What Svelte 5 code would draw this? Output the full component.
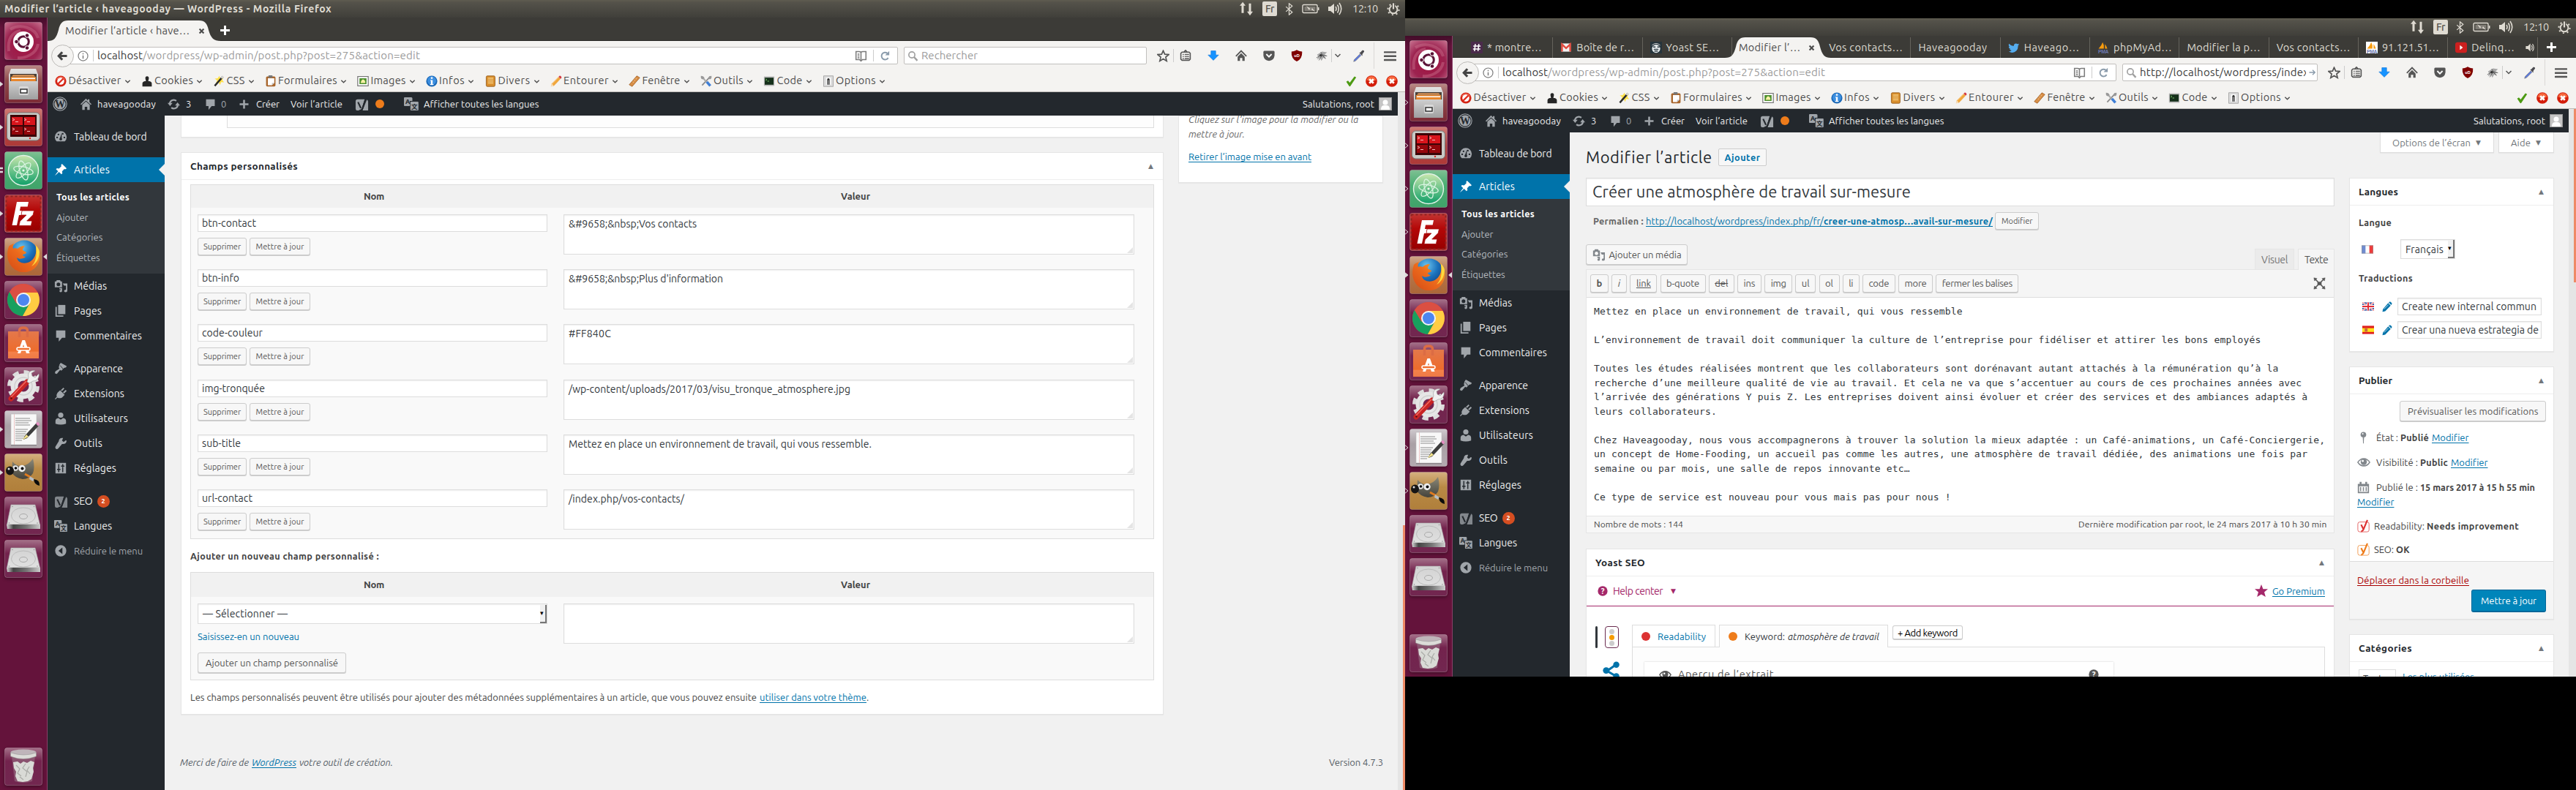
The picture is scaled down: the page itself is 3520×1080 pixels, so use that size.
<script>
  // Keeps a label at a fixed width whatever sans-serif is installed.
  function fit(node, width) {
    const range = document.createRange();
    range.selectNodeContents(node);
    const natural = range.getBoundingClientRect().width;
    const count = node.textContent.length;
    node.style.letterSpacing = `${(width - natural) / count}px`;
    node.style.width = `${width}px`;
  }

  const apps = ['ubuntu', 'files', 'terminator', 'atom', 'filezilla', 'firefox', 'chrome', 'software', 'settings', 'gedit', 'gimp', 'disk', 'disk'];
  const running = ['files', 'terminator', 'atom', 'filezilla', 'firefox', 'gedit', 'gimp'];

  const devItems = [
    ['forbid', 'Désactiver', 72], ['stamp', 'Cookies', 53], ['wand', 'CSS', 25], ['clip', 'Formulaires', 81],
    ['image', 'Images', 48], ['info', 'Infos', 35], ['book', 'Divers', 44], ['pencil', 'Entourer', 62],
    ['ruler', 'Fenêtre', 52], ['tools', 'Outils', 41], ['term', 'Code', 35], ['switch', 'Options', 55]
  ];

  const menuTop = [['media', 'Médias', 45], ['pages', 'Pages', 38], ['comment', 'Commentaires', 93]];
  const menuMid = [['brush', 'Apparence', 67], ['plug', 'Extensions', 69], ['user', 'Utilisateurs', 74], ['wrench', 'Outils', 39], ['sliders', 'Réglages', 58]];

  const fields = [
    ['btn-contact', 74, '&#9658;&nbsp;Vos contacts', 175],
    ['btn-info', 51, "&#9658;&nbsp;Plus d'information", 211],
    ['code-couleur', 83, '#FF840C', 58],
    ['img-tronquée', 86, '/wp-content/uploads/2017/03/visu_tronque_atmosphere.jpg', 385],
    ['sub-title', 53, 'Mettez en place un environnement de travail, qui vous ressemble.', 414],
    ['url-contact', 69, '/index.php/vos-contacts/', 158]
  ];

  const tabsBefore = [['slack', '* montre…', 75], ['gmail', 'Boîte de r…', 79], ['yoastfav', 'Yoast SE…', 73]];
  const tabsAfter = [
    [null, 'Vos contacts…', 101], [null, 'Haveagooday', 94], ['twitter', 'Haveago…', 76], ['pma', 'phpMyAd…', 80],
    [null, 'Modifier la p…', 100], [null, 'Vos contacts…', 101], ['pmawhite', '91.121.51…', 78], ['youtube', 'Delinq…', 59]
  ];

  const quicktags = [
    ['b', 25, 'bold'], ['i', 21, 'ital'], ['link', 37, 'und'], ['b-quote', 62, ''], ['del', 35, 'strike'], ['ins', 33, ''], ['img', 38, ''],
    ['ul', 28, ''], ['ol', 28, ''], ['li', 23, ''], ['code', 45, ''], ['more', 47, ''], ['fermer les balises', 113, '']
  ];

  const article = [
    'Mettez en place un environnement de travail, qui vous ressemble', '',
    'L’environnement de travail doit communiquer la culture de l’entreprise pour fidéliser et attirer les bons employés', '',
    'Toutes les études réalisées montrent que les collaborateurs sont dorénavant autant attachés à la rémunération qu’à la',
    'recherche d’une meilleure qualité de vie au travail. Et cela ne va que s’accentuer au cours de ces prochaines années avec',
    'l’arrivée des générations Y puis Z. Les entreprises doivent ainsi évoluer et créer des services et des ambiances adaptés à',
    'leurs collaborateurs.', '',
    'Chez Haveagooday, nous vous accompagnerons à trouver la solution la mieux adaptée : un Café-animations, un Café-Conciergerie,',
    'un concept de Home-Fooding, un accueil pas comme les autres, une atmosphère de travail dédiée, des animations une fois par',
    'semaine ou par mois, une salle de repos innovante etc…', '',
    'Ce type de service est nouveau pour vous mais pas pour nous !'
  ].join('\n');
</script>

{#snippet T(s, w, cls = '')}<span class="t {cls}" use:fit={w}>{s}</span>{/snippet}

{#snippet appIcon(n)}
  <svg class="app" viewBox="0 0 52 52">
    {#if n === 'ubuntu'}
      <rect class="tile" width="51" height="51" x=".5" y=".5" rx="3" fill="url(#gUbuntu)" />
      <path d="M8 10C22 2 42 8 46 22M46 30C44 44 28 50 18 49M6 40C4 24 10 14 22 12" fill="none" stroke="#d8869f" stroke-width="4" opacity=".35" />
      <circle cx="26" cy="27" r="14" fill="#fff" />
      <circle cx="26" cy="27" r="7.3" fill="none" stroke="#5b1236" stroke-width="3" />
      <g fill="#5b1236" stroke="#fff" stroke-width="1"><circle cx="16.500" cy="27" r="2.800" /><circle cx="31" cy="18.500" r="2.800" /><circle cx="31" cy="35.500" r="2.800" /></g>
    {:else if n === 'files'}
      <rect class="tile" width="51" height="51" x=".5" y=".5" rx="3" fill="url(#gFiles)" />
      <path d="M6 13 9 5h34l3 8v34H6z" fill="url(#gMetal)" /><path d="M8 12h36v12H8z" fill="#4a4038" />
      <path d="M9 16h34v8H9z" fill="#e8862c" /><path d="M10 17.500h32v1.500H10z" fill="#fff" /><path d="M12 13.500h28l2 2H10z" fill="#f0a05c" />
      <path d="M7 22h39v25H7z" fill="url(#gDrawer)" /><rect x="20" y="29" width="13" height="12" rx="2" fill="#d8d8d8" /><rect x="22" y="33" width="9" height="5" fill="#fff" stroke="#333" stroke-width="1.500" />
    {:else if n === 'terminator'}
      <rect class="tile" width="51" height="51" x=".5" y=".5" rx="3" fill="url(#gTerm)" />
      <rect x="3.500" y="6" width="45" height="38" rx="5" fill="#c9c9c5" stroke="#777" /><rect x="8" y="9" width="36" height="30" fill="#3c0507" />
      <path d="M10 12h15v11H10zM27 12h15v11H27z" fill="#d8151c" /><path d="M10 25h15v11H10zM27 25h15v11H27z" fill="#94060b" />
      <path d="m11 14 3 1.500-3 1.500m4 1.500h4m8-4.500 3 1.500-3 1.500m4 1.500h4M11 27l3 1.500-3 1.500m4 1.500h4m8-4.500 3 1.500-3 1.500m4 1.500h4" fill="none" stroke="#f2b8b8" />
      <circle cx="35" cy="41" r="1.200" fill="#e02020" />
    {:else if n === 'atom'}
      <rect class="tile" width="51" height="51" x=".5" y=".5" rx="3" fill="url(#gAtom)" />
      <circle cx="26" cy="26" r="20.500" fill="url(#gAtom2)" stroke="#e2f3e8" stroke-width="1.400" />
      <g fill="none" stroke="#d8f3e0" stroke-width="1.300"><ellipse cx="26" cy="26" rx="13.500" ry="5" transform="rotate(13 26 26)" /><ellipse cx="26" cy="26" rx="13.500" ry="5" transform="rotate(73 26 26)" /><ellipse cx="26" cy="26" rx="13.500" ry="5" transform="rotate(-47 26 26)" /></g>
      <circle cx="26" cy="26" r="1.600" fill="#e8f8ec" />
    {:else if n === 'filezilla'}
      <rect class="tile" width="51" height="51" x=".5" y=".5" rx="3" fill="#bb3a38" />
      <rect x="2.500" y="2.500" width="47" height="47" fill="url(#gFz)" stroke="#8d2422" stroke-width="2" stroke-dasharray="3 3" />
      <path d="M17 10h16l-1.300 6.500H22l-1 5.500h9l-1.200 6H20l-3 14h-6.500z" fill="#fff" /><path d="M24 22h16.500l-1.300 5.500-8.500 8.500h7l-1.300 6.500H20l1.300-6 8.700-8.500h-7z" fill="#fff" stroke="#a80f0f" stroke-width=".8" />
    {:else if n === 'firefox'}
      <rect class="tile" width="51" height="51" x=".5" y=".5" rx="3" fill="url(#gFf)" />
      <circle cx="27" cy="23" r="19.500" fill="url(#gGlobe)" />
      <path d="M6 12c-6 17 3 34 19 35 16 1 25-12 23-25-1-6-3-10-6-13 3 9 1 18-6 23-7 5-18 3-19-5 3 3 9 2 12-1-3 0-4-2-4-3 2-1 5-1 5-3l-5-3c0-3 2-4 3-6-5 0-8 2-10 4-2-1-5-1-6 0-1-3 0-5 1-7-4 1-6 3-7 4z" fill="url(#gFox)" />
      <path d="M48 20c-1 9-4 15-11 19 6-6 8-15 6-28 3 2 5 6 5 9z" fill="#ffd93d" />
    {:else if n === 'chrome'}
      <rect class="tile" width="51" height="51" x=".5" y=".5" rx="3" fill="url(#gDark)" />
      <circle cx="26" cy="26" r="22" fill="#dc4437" />
      <path d="M6.900 15A22 22 0 0 0 25 48l9.500-17L26 26z" fill="#18a05e" /><path d="M25 48a22 22 0 0 0 20.500-32H26v10l8.500 5z" fill="#ffcd42" /><path d="M6.900 15 16.400 31 26 16h19.500A22 22 0 0 0 6.900 15z" fill="#db4f42" />
      <circle cx="26" cy="26" r="10" fill="#f3f3f3" /><circle cx="26" cy="26" r="8" fill="#4d86f0" />
    {:else if n === 'software'}
      <rect class="tile" width="51" height="51" x=".5" y=".5" rx="3" fill="url(#gDark)" />
      <path d="M5 10h42v37H5z" fill="url(#gBag)" /><path d="M20.500 18V9q0-4 5.500-4t5.500 4v9" fill="none" stroke="#dc6c44" stroke-width="3.500" />
      <path d="M18 40 24.500 22h3.500L34.500 40H30l-4-12-4 12z" fill="#fff" /><rect x="17" y="32" width="18" height="4" rx="2" fill="#f07030" stroke="#fff" stroke-width="1.500" />
    {:else if n === 'settings'}
      <rect class="tile" width="51" height="51" x=".5" y=".5" rx="3" fill="url(#gDark)" />
      <circle cx="26" cy="26" r="19" fill="none" stroke="#dcdcdc" stroke-width="6" stroke-dasharray="8 6.920" /><circle cx="26" cy="26" r="12.500" fill="none" stroke="#e6e6e6" stroke-width="10" />
      <circle cx="26" cy="26" r="12" fill="none" stroke="#cfcfcf" stroke-width="1.500" />
      <path d="M9 43 31 20" stroke="#c92424" stroke-width="7" stroke-linecap="round" /><path d="M9 41 30 19" stroke="#ef6a62" stroke-width="1.500" />
      <path d="M31 20l3 2 5-3c6 0 9-5 8-10l-5 5-4-2-1-4 5-3c-7-2-11 4-9 9z" fill="#f0f0f0" stroke="#999" stroke-width=".6" /><circle cx="9.500" cy="42.500" r="1.200" fill="#5b0f0f" />
    {:else if n === 'gedit'}
      <rect class="tile" width="51" height="51" x=".5" y=".5" rx="3" fill="url(#gPaper)" />
      <path d="M9 5h35v42H9z" fill="#f8f8f8" stroke="#bbb" stroke-width=".6" /><path d="M9 47h35v1.500H9z" fill="#8b858a" />
      <path d="M15 11h20M15 14h22M15 17h18M15 20h20M15 26h17M15 29h15M15 32h14M15 35h12M15 38h13M15 41h9" stroke="#8e8e8e" stroke-width="1" /><path d="M13.500 5v42" stroke="#e9b8b8" stroke-width=".8" />
      <path d="M44 17l3.500 3.500L31 38l-5 2 1.500-5z" fill="#3d3d3d" /><path d="M43 18l2-2q3 0 3 4l-2 1.500z" fill="#e48fc2" /><path d="m30 33 3 3-8.500 4.500z" fill="#f2e38a" />
    {:else if n === 'gimp'}
      <rect class="tile" width="51" height="51" x=".5" y=".5" rx="3" fill="url(#gGimp)" />
      <path d="M11 11q6 7 13 6 9-1 15-10 3 12 0 20-5 8-14 8-11-2-15-9z" fill="url(#gWilber)" />
      <circle cx="15" cy="20" r="3.800" fill="#e9e9e9" /><circle cx="24" cy="20.500" r="4.700" fill="#eee" /><circle cx="15.500" cy="20" r="1.800" /><circle cx="24.500" cy="20.500" r="2" />
      <ellipse cx="7.500" cy="23.500" rx="5.500" ry="6" fill="#151515" /><circle cx="6" cy="21" r="1.500" fill="#ddd" />
      <path d="M28 28l9 5" stroke="#e07b1f" stroke-width="3" /><path d="m35 31 6 4-2 3-5-3z" fill="#b8bfc5" /><path d="M40 35q9 1 8 9-7-1-8-9z" fill="#0c0c0c" />
    {:else if n === 'disk'}
      <rect class="tile" width="51" height="51" x=".5" y=".5" rx="3" fill="url(#gDark)" />
      <path d="M9 11h33l6.500 27h-45z" fill="url(#gDisk)" stroke="#aaa" stroke-width=".6" /><path d="M3 38h46v6H4z" fill="url(#gDiskBase)" />
      <ellipse cx="26" cy="26" rx="16.500" ry="11" fill="none" stroke="#bbb" /><ellipse cx="26" cy="27" rx="5.500" ry="3.500" fill="#dcdcdc" stroke="#aaa" />
      <g fill="#999"><circle cx="11" cy="13.500" r=".8" /><circle cx="40.500" cy="13.500" r=".8" /><circle cx="6.500" cy="36" r=".8" /><circle cx="45" cy="36" r=".8" /></g>
    {:else}
      <rect class="tile" width="51" height="51" x=".5" y=".5" rx="3" fill="url(#gDark)" />
      <path d="M10 12 14 46q12 4 24 0l4-34z" fill="#9d7d8e" opacity=".5" />
      <ellipse cx="26" cy="6.500" rx="17.500" ry="4" fill="#bfb5ba" /><path d="M8.500 7v5q17 7 35 0V7q-17 6-35 0z" fill="#dcdcd8" stroke="#8a8a8a" stroke-width=".5" />
      <path d="m12 20 6-1 4 3 4-3 5 2 5-3 5 2-2 8 1 5-3 10-5 3-7 1-7-1-3-7 1-6-3-5z" fill="#d9dad6" />
      <path d="m16 24 5 5-3 6 5 4m6-17-4 6 6 5-2 7m5-14-3 5 4 5m-14 4 5 4" fill="none" stroke="#a9aaa6" stroke-width="1.200" />
    {/if}
  </svg>
{/snippet}

{#snippet ic(n, cls = '')}
  <svg class="i {cls}" viewBox="0 0 20 20">
    {#if n === 'wp'}
      <circle cx="10" cy="10" r="9.200" fill="none" stroke="currentColor" stroke-width="1.100" /><circle cx="10" cy="10" r="7.600" fill="currentColor" />
      <text x="10" y="15.200" text-anchor="middle" class="wmark">W</text>
    {:else if n === 'home'}<path d="m10 1 1.500 1.500L13 4V2h2.500v4.500L19 10l-1.500 1L10 4 2.500 11 1 10zM4 11l6-5.500L16 11v8h-4v-5H8v5H4z" fill="currentColor" />
    {:else if n === 'refresh'}<path d="M3.500 8.500A6.500 6.500 0 0 1 14 4.500M16.500 11.500A6.500 6.500 0 0 1 6 15.500" fill="none" stroke="currentColor" stroke-width="2.600" /><path d="M0 8h8L4 13zM12 12h8l-4-5z" fill="currentColor" />
    {:else if n === 'comment'}<path d="M3 2h14v11h-5l-5 6v-6H3z" fill="currentColor" />
    {:else if n === 'plus'}<path d="M8.300 2h3.400v6.300H18v3.400h-6.300V18H8.300v-6.300H2V8.300h6.300z" fill="currentColor" />
    {:else if n === 'yoast'}<path d="M4 3h10l-5 16H4q-3 0-3-3V6q0-3 3-3zM16 3q3 1 3 3v13h-8z" fill="currentColor" /><path d="m15.500 0-6 19" stroke="#23282d" stroke-width="1" /><path d="m4.500 7 4 8.500M17 1l-6 15q-1 3-5 3.500" fill="none" stroke="#23282d" stroke-width="2.200" />
    {:else if n === 'lang'}<path d="M1 1h9q1.500 0 1.500 1.500V6H8v7H1Q0 13 0 12V2q0-1 1-1z" fill="currentColor" /><rect x="8.800" y="7" width="11" height="12" rx="1" fill="currentColor" /><text x="5" y="10" text-anchor="middle" class="glyph">A</text><text x="14.300" y="16.500" text-anchor="middle" class="glyph tiny">文</text>
    {:else if n === 'dash'}<path d="M3.800 17A9 9 0 1 1 16.200 17z" fill="currentColor" /><g fill="#23282d"><circle cx="4.500" cy="11" r="1.300" /><circle cx="6.500" cy="6.500" r="1.300" /><circle cx="13" cy="5.500" r="1.300" /><circle cx="15.500" cy="11" r="1.300" /><path d="m11.500 4-2.800 8.500 2.800.5z" /><circle cx="10" cy="13.500" r="2" /></g>
    {:else if n === 'pin'}<path d="m10.400 3 1.500-2L19 8l-2.200 1.500-1.300-.5-3.500 3.500.5 3-1.500 1.500-3.700-3.700Q4 17 1 19q2-3 5-6.500L2.800 9.200l1.500-1.500 3 .5L11 4.600z" fill="currentColor" />
    {:else if n === 'media'}<path d="M1 3h2l1-2h5l1 2h2v9H1z" fill="currentColor" /><circle cx="6.500" cy="7.500" r="2.800" class="hole" /><path d="M13 6h7v11q0 2.500-2.500 2.500T15 17.500q0-2 3-2v-6h-3zM8 13h4v4.500q0 2-2 2t-2-2q0-1.800 2-1.800V15H8z" fill="currentColor" />
    {:else if n === 'pages'}<path d="M6 1h11v14H6z" fill="currentColor" /><path d="M3 4v14h11" fill="none" stroke="currentColor" stroke-width="2" />
    {:else if n === 'brush'}<path d="m8 4 2-3 9 5-1 2-3 1-4 4-2-1-5 6-3-1 1-3 6-4-1-2z" fill="currentColor" /><path d="m9 5 5 6" stroke="#23282d" stroke-width="1" />
    {:else if n === 'plug'}<path d="m5 9 4-4 7 7-4 4q-4 2-7 0l-3 3-1-1 3-3Q3 12 5 9zM10 5l4-4 1.500 1.500L12 6zM15 10l4-4-1.500-1.500L13.500 8z" fill="currentColor" />
    {:else if n === 'user'}<circle cx="10" cy="5" r="4" fill="currentColor" /><path d="M2 18v-4q0-4 4.500-4.500L10 12l3.500-2.500Q18 10 18 14v4q-8 3-16 0z" fill="currentColor" />
    {:else if n === 'wrench'}<path d="M17 5.500 14 8l-2.500-2L13 2q-6-1-6.500 5l-5 8q-1 2 .7 3.300T5.500 18l6-7q6 1 7-5z" fill="currentColor" transform="translate(.5 0)" />
    {:else if n === 'sliders'}<rect x="2" y="2" width="16" height="16" fill="currentColor" /><path d="M7 4v8M13 8v8M4.500 12h5M10.500 7h5M7 12v4M13 4v3" stroke="#23282d" stroke-width="1.600" />
    {:else if n === 'collapse'}<circle cx="10" cy="10" r="8.500" fill="currentColor" /><path d="M12.500 5v10L6.500 10z" fill="#23282d" />
    {:else if n === 'forbid'}<circle cx="10" cy="10" r="9.500" fill="#d42414" /><circle cx="10" cy="10" r="6" fill="#fff" /><path d="m5 15 10-10" stroke="#e03020" stroke-width="3" /><path d="M3 7a8 8 0 0 1 14 0" fill="none" stroke="#ff9a80" stroke-width="1" />
    {:else if n === 'stamp'}<path d="M2 14q0-3 4-4h2L7 5a3 3.500 0 0 1 6 0l-1 5h2q4 1 4 4v5H2z" fill="#262626" />
    {:else if n === 'wand'}<path d="m11 1 1.500 4L18 3l-2 5 3 4-5-.5-2 5-2-4-5 1 2-5-4-3 5-.5z" fill="#ffe14a" /><path d="M17 2 3 18" stroke="#2b2b2b" stroke-width="3" /><path d="m17.500 1.500-3 3.500" stroke="#ddd" stroke-width="3" />
    {:else if n === 'clip'}<rect x="2" y="2" width="16" height="17" rx="2" fill="#a9662c" /><path d="M5 5h11v8l-4 4H5z" fill="#fff" /><path d="M16 13h-4v4z" fill="#bbb" /><rect x="6" y="0" width="7" height="4" rx="1" fill="#777" />
    {:else if n === 'image'}<rect x="1" y="2" width="18" height="16" fill="#fff" stroke="#777" stroke-width="1.500" /><rect x="4" y="5" width="12" height="10" fill="#4d8f2d" /><path d="M6 13q1-5 4-6 4 1 4 6z" fill="#f7f1a4" />
    {:else if n === 'info'}<circle cx="10" cy="10" r="9.500" fill="#1967b5" /><circle cx="10" cy="9" r="7.500" fill="#3d8fe0" /><path d="M8.500 3h3v3h-3zM7.500 8h4v7h1.500v1.500H7V15h1.500V9.500h-1z" fill="#fff" />
    {:else if n === 'book'}<rect x="3" y="1" width="15" height="18" rx="2" fill="#d9902f" stroke="#8d5210" /><path d="M6 4h9v10H6z" fill="#f6c877" /><path d="M6 6.500h9M6 9h9M6 11.500h9" stroke="#c9842b" />
    {:else if n === 'pencil'}<path d="M14 2.500 17.500 6 6 18l-5 1 1.500-5z" fill="#f0a63c" /><path d="m14 2.500 2-2q3 0 3 3.500l-1.500 2z" fill="#d43b45" /><path d="m1 19 1.500-5L6 18z" fill="#f7e0c0" /><path d="M3.500 14.500 14.500 3" stroke="#f9cc84" />
    {:else if n === 'ruler'}<path d="m14 1 5 3L6 19l-5-3z" fill="#d99048" stroke="#9c5a20" /><path d="m12 5 1.500 1M9.500 8l1.500 1M7 11l1.500 1" stroke="#fbe0b8" />
    {:else if n === 'tools'}<path d="m17 2-14 15" stroke="#8b8b8b" stroke-width="2.200" /><path d="m5 5 6 7" stroke="#aaa" stroke-width="2.500" /><path d="m11 11 6 7" stroke="#3f7fd6" stroke-width="4.500" /><path d="M1 1q5 0 6 4L4 7Q0 6 1 1zM19 1q-5 0-5 4l2 2q4-1 3-6z" fill="#999" />
    {:else if n === 'term'}<rect x="1" y="2" width="18" height="16" rx="1" fill="#b8b8b8" /><rect x="2.500" y="4" width="15" height="12" fill="#15301a" /><path d="m4 6 2 1.500L4 9m3 1h3" stroke="#8fe07a" fill="none" />
    {:else if n === 'switch'}<rect x="2" y="1" width="16" height="18" fill="#dcdcdc" stroke="#999" /><rect x="6" y="4" width="8" height="12" fill="#fff" /><path d="M8 16V7q0-2 2-2t2 2v9z" fill="#222" /><path d="M10 8v8" stroke="#eee" />
    {:else if n === 'check'}<path d="m2 11 3-2 3 3.500L16 2l3 1.500L9 18.500q-1 1-2 0z" fill="#4c9a12" />
    {:else if n === 'stop'}<circle cx="10" cy="10" r="9.800" fill="#d31e0b" /><path d="M2 8a8.200 8.200 0 0 1 16 0q-8 3-16 0z" fill="#ff7a4a" opacity=".8" /><path d="m6.500 6.500 7 7m0-7-7 7" stroke="#fff" stroke-width="3.400" />
    {:else if n === 'chev'}<path d="m3 6 7 7 7-7" fill="none" stroke="currentColor" stroke-width="3" />
    {:else if n === 'star'}<path d="m10 1.500 2.500 5.800 6.300.5-4.800 4.100 1.500 6.200-5.500-3.300-5.500 3.300L6 11.900 1.200 7.800l6.300-.5z" fill="none" stroke="currentColor" stroke-width="2" />
    {:else if n === 'list'}<path d="M4 4h12l2 2v10l-2 2H4l-2-2V6zM7 4l3-3 3 3" fill="none" stroke="currentColor" stroke-width="2" /><path d="M5 8h2m1.500 0H16M5 11.500h2m1.500 0H16M5 15h2m1.500 0H16" stroke="currentColor" stroke-width="1.600" />
    {:else if n === 'down'}<path d="M6 2h8v7h5l-9 9-9-9h5z" fill="#1793ff" stroke="#0c76dc" stroke-width=".8" />
    {:else if n === 'nhome'}<path d="M1 11 10 2l9 9" fill="none" stroke="currentColor" stroke-width="2.200" /><path d="m4 12 6-6 6 6v7h-4v-5H8v5H4z" fill="currentColor" />
    {:else if n === 'pocket'}<path d="M2 2h16q1.500 0 1.500 2v6q-1 8.500-9.500 9Q1.500 18.500.5 10V4Q.5 2 2 2z" fill="currentColor" /><path d="m5.500 7.500 4.500 4.500 4.500-4.500" fill="none" stroke="#fff" stroke-width="2.300" />
    {:else if n === 'ublock'}<path d="m10 0 1 1q4 2 8 2 1 12-9 17Q0 15 1 3q4 0 8-2z" fill="#800000" /><text x="10" y="12.500" text-anchor="middle" class="ub">uD</text>
    {:else if n === 'fly'}<path d="m2 8 8-5 8 1-4 4 4 2-4 1 2 4-4-2-3 5-2-5-5 3 2-5z" fill="#a8a8a8" /><path d="m1 13 8-5 9 2M5 17l5-8 6 5M8 4l5 8" stroke="#555" fill="none" /><circle cx="8" cy="9" r="2" fill="#333" />
    {:else if n === 'dropper'}<path d="M12 7 3 16l-1 3 3-1 9-9z" fill="#5a78e0" stroke="#777" stroke-width=".8" /><path d="m11 5 2-1 3-3q3-1 3 2l-3 4v3z" fill="#4b4b50" />
    {:else if n === 'burger'}<path d="M1 4h18M1 10.300h18M1 16.500h18" stroke="currentColor" stroke-width="2.800" stroke-linecap="round" />
    {:else if n === 'reader'}<path d="M2 3h5q3 0 3 2 0-2 3-2h5v13h-6l-2 2-2-2H2zM10 5v11M4.500 7h3m-3 3h3m-3 3h3" fill="none" stroke="currentColor" stroke-width="1.800" />
    {:else if n === 'reload'}<path d="M15.500 13.500A6.500 6.500 0 1 1 14 5" fill="none" stroke="currentColor" stroke-width="2.600" /><path d="M17.500 1v7.500H10z" fill="currentColor" />
    {:else if n === 'search'}<circle cx="8" cy="8" r="5.500" fill="none" stroke="currentColor" stroke-width="2.200" /><path d="m12 12 6 6.500" stroke="currentColor" stroke-width="3.200" />
    {:else if n === 'go'}<path d="M1 10h15M10 3.500 16.500 10 10 16.500" fill="none" stroke="currentColor" stroke-width="2.800" />
    {:else if n === 'infoc'}<circle cx="10" cy="10" r="8.700" fill="none" stroke="currentColor" stroke-width="1.600" /><path d="M10 5v2m0 2v6" stroke="currentColor" stroke-width="2" />
    {:else if n === 'back'}<path d="M9.500 3 3 10l6.500 7M3.500 10H18" fill="none" stroke="currentColor" stroke-width="4.200" />
    {:else if n === 'slack'}<rect width="20" height="20" fill="#4a2b4b" /><path d="M7.500 4 6 16m7.500-12L12 16M4 7.500h12.500M3.500 12.500H16" stroke="#fff" stroke-width="2" />
    {:else if n === 'gmail'}<rect x="2" y="3" width="16" height="14" fill="#f1f1f1" /><path d="M3 17V4.500l7 6.500 7-6.500V17" fill="none" stroke="#e04a3e" stroke-width="3" />
    {:else if n === 'yoastfav'}<rect width="20" height="20" fill="#26343c" /><circle cx="10" cy="12" r="7" fill="#e8edef" /><path d="M4 5q6-5 12 0M5 9h4m3 0h4M6 13h8M7 16h6" stroke="#26343c" stroke-width="1.700" fill="none" /><path d="M3 6q7-6 14 0" stroke="#eee" fill="none" />
    {:else if n === 'twitter'}<path d="M19 4.500q-1 .6-2 .6 1-.6 1.500-2-1.200.7-2.400.9a4 4 0 0 0-6.500 3.500Q5 7.500 1.500 3.500q-1.500 3.500 1.200 5.300-.9 0-1.700-.5 0 3 3 4-.8.200-1.700 0 1 2.500 3.600 2.700Q3.500 17 .5 16.700q8 4.500 13.500-1Q17.500 12 17 6.500q1.500-1 2-2z" fill="#55acee" />
    {:else if n === 'pma' || n === 'pmawhite'}
      {#if n === 'pmawhite'}<rect width="20" height="20" fill="#fff" />{/if}
      <path d="M9 1q3 5 2 11H2Q7 7 9 1zm4 3q3 4 4 8h-4z" fill="#f89c0e" /><text x="10" y="19.500" text-anchor="middle" class="pma">PMA</text>
    {:else if n === 'youtube'}<rect x="0" y="1" width="20" height="18" rx="4" fill="#cd201f" /><path d="m8 6 5 4-5 4z" fill="#fff" />
    {:else if n === 'sound'}<path d="M2 7h4l5-5v16l-5-5H2z" fill="currentColor" /><path d="M13 6q3 4 0 8m2-11q5 7 0 14" fill="none" stroke="currentColor" stroke-width="1.600" />
    {:else if n === 'expand'}<path d="m1 1 5 1-1.500 1.500L8 7 7 8 3.500 4.500 2 6zM19 1l-5 1 1.500 1.500L12 7l1 1 3.500-3.500L18 6zM1 19l1-5 1.500 1.500L7 12l1 1-3.500 3.500L6 18zM19 19l-5-1 1.500-1.500L12 13l1-1 3.500 3.500L18 14zM7 7.500h6v5H7z" fill="currentColor" stroke="currentColor" stroke-width=".6" />
    {:else if n === 'fr'}<path d="M0 3h20v14H0z" fill="#fff" /><path d="M0 3h6.700v14H0z" fill="#6f8bd0" /><path d="M13.300 3H20v14h-6.700z" fill="#ee3b3b" /><path d="M.5 3.500h19v13H.5z" fill="none" stroke="#999" stroke-width=".8" />
    {:else if n === 'gb'}<path d="M0 3h20v14H0z" fill="#2d4f9e" /><path d="m0 3 20 14M20 3 0 17" stroke="#fff" stroke-width="3" /><path d="m0 3 20 14M20 3 0 17" stroke="#e33" stroke-width="1" /><path d="M10 3v14M0 10h20" stroke="#fff" stroke-width="5" /><path d="M10 3v14M0 10h20" stroke="#e22f37" stroke-width="2.600" />
    {:else if n === 'es'}<path d="M0 3h20v14H0z" fill="#e01f1f" /><path d="M0 7h20v6.500H0z" fill="#ffe31a" /><path d="M4 7.500h5V13H4z" fill="#c96a3a" />
    {:else if n === 'edit'}<path d="m12.500 3 4.500 4.500L7 18l-5 1 1-5zM13.500 2 15 .8q1-.6 2 .2l2 2q.8 1 0 2L18 6.500z" fill="currentColor" /><path d="m5 14 8-8" stroke="#fff" />
    {:else if n === 'post'}<circle cx="10" cy="5" r="4.500" fill="currentColor" /><path d="M9 9h2l-.5 10h-1z" fill="currentColor" /><circle cx="9" cy="3.500" r="1.200" fill="#fff" />
    {:else if n === 'eye'}<path d="M0 10q4-6.500 10-6.500T20 10q-4 6.500-10 6.500T0 10z" fill="currentColor" /><path d="M2 10q3-4.500 8-4.500t8 4.500q-3 4.500-8 4.500T2 10z" fill="#fff" /><circle cx="10" cy="9.500" r="4.700" fill="currentColor" /><circle cx="8.500" cy="8" r="1.500" fill="#fff" />
    {:else if n === 'cal'}<path d="M1 4h3V1h3v3h6V1h3v3h3v15H1z" fill="currentColor" /><path d="M3 8h14v9H3z" fill="#fff" /><path d="M5.500 9v7M10 9v7m4.500-7v7" stroke="currentColor" stroke-width="1.800" />
    {:else if n === 'yred' || n === 'yorange'}<rect x="1" y="4" width="17" height="15" rx="3" fill="#fff" stroke="currentColor" stroke-width="1" opacity=".8" /><path d="m6 8 3.500 7M15.500 1 9.500 15.500Q8.500 18 6 18.500" fill="none" stroke="currentColor" stroke-width="2.400" />
    {:else if n === 'help'}<circle cx="10" cy="10" r="9.500" fill="currentColor" /><text x="10" y="15" text-anchor="middle" class="qm">?</text>
    {:else if n === 'gostar'}<path d="m10 0 2.700 7H20l-5.500 4.800L16.500 19 10 15l-6.500 4 2-7.200L0 7h7.300z" fill="currentColor" />
    {:else if n === 'share'}<path d="M15 4 5 11l10 6" fill="none" stroke="currentColor" stroke-width="2.500" /><circle cx="15.500" cy="4" r="3.500" fill="currentColor" /><circle cx="4" cy="10.500" r="3.700" fill="currentColor" /><circle cx="15.500" cy="17" r="3.500" fill="currentColor" />
    {:else if n === 'net'}<path d="M6.500 19V6H9L5.200 1 1 6h2.500v10h3zM13.500 3v11H11l4 5.500L19 14h-2.500V3z" fill="currentColor" transform="translate(0 -.3)" />
    {:else if n === 'bt'}<path d="m5 6 10 9-5 4V1l5 4-10 9" fill="none" stroke="currentColor" stroke-width="1.500" />
    {:else if n === 'gear'}<circle cx="10" cy="11" r="6" fill="none" stroke="currentColor" stroke-width="2.200" /><circle cx="10" cy="11" r="8.400" fill="none" stroke="currentColor" stroke-width="2.200" stroke-dasharray="2.300 4.300" /><path d="M7.500 0h5v11h-5z" fill="#4b4943" /><path d="M10 1.500v9" stroke="currentColor" stroke-width="2.400" />
    {:else if n === 'closex'}<path d="m3.500 3.500 13 13m0-13-13 13" stroke="currentColor" stroke-width="4.800" />
    {/if}
  </svg>
{/snippet}

{#snippet panel(title)}
  <div class="panel">
    <div class="ptitle">{#if title}{@render T(title, 447, 'bold p15')}{/if}</div>
    <div class="tray">
      {@render ic('net', 's20')}
      <span class="kbd">{@render T('Fr', 12, 'kb')}</span>
      {@render ic('bt', 's17')}
      <svg class="batt" viewBox="0 0 24 14"><rect x="1" y="1.500" width="20" height="11" rx="1.500" fill="none" stroke="currentColor" stroke-width="1.400" /><path d="M3.500 4h15v6h-15z" fill="currentColor" opacity=".35" /><path d="M22 5h1.500v4H22z" fill="currentColor" /><path d="m6 3 7 5 1-2 4 5-7-4-1 2z" fill="currentColor" /></svg>
      <svg class="vol" viewBox="0 0 21 18"><path d="M1 6h3l5-4v14l-5-4H1z" fill="currentColor" /><path d="M11 6q2 3 0 6m2.500-8.500q3.500 5.500 0 11M16 1q5.500 8 0 16" fill="none" stroke="currentColor" stroke-width="1.600" /></svg>
      {@render T('12:10', 35, 'p15')}
      {@render ic('gear', 's18')}
    </div>
  </div>
{/snippet}

{#snippet launcher(outlined)}
  <div class="launcher">
    {#each [...apps, 'trash'] as a}
      <div class="slot" class:last={a === 'trash'}>
        <svg class="mark" viewBox="0 0 6 12">
          {#if a === 'atom' && !outlined}<path d="M0 3h4M0 8h4" stroke="#ddd" stroke-width="2.500" />
          {:else if running.includes(a)}<path d="M-1 2 4 6l-5 4z" fill={outlined && a !== 'firefox' ? 'none' : '#ddd'} stroke="#ddd" stroke-width={outlined ? 1 : 0.5} />{/if}
        </svg>
        {@render appIcon(a)}
        <svg class="mark" viewBox="0 0 6 12">{#if a === 'firefox'}<path d="M6 2 1 6l5 4z" fill="#ddd" />{/if}</svg>
      </div>
    {/each}
  </div>
{/snippet}

{#snippet navbar(query, queryWidth)}
  <div class="nav">
    <span class="backbtn">{@render ic('back', 's15')}</span>
    <div class="url">
      {@render ic('infoc', 's15 grey')}<span class="vsep"></span>
      {@render T('localhost', 62, 'host')}{@render T('/wordpress/wp-admin/post.php?post=275&action=edit', 379, 'path')}
      <span class="grow"></span>
      {@render ic('reader', 's17 grey')}<span class="vsep tall"></span>{@render ic('reload', 's15 blueg')}
    </div>
    <div class="find" class:narrow={queryWidth > 100}>
      {@render ic('search', 's15 lgrey')}
      {#if queryWidth > 100}
        <span class="q">{@render T(query, queryWidth, 'host')}</span>{@render ic('go', 's10 blueg')}
      {:else}{@render T(query, queryWidth, 'path')}{/if}
    </div>
    <div class="btns">
      <span class="first">{@render ic('star', 's17')}</span><i class="vline"></i>
      <span>{@render ic('list', 's16')}</span><span>{@render ic('down', 's16')}</span><span>{@render ic('nhome', 's16')}</span>
      <span>{@render ic('pocket', 's16')}</span><span>{@render ic('ublock', 's16')}</span><span class="flyc">{@render ic('fly', 's17')}</span><i class="vline"></i>
      <span>{@render ic('chev', 's10')}</span><span>{@render ic('dropper', 's17')}</span><i class="vline long"></i><span>{@render ic('burger', 's17')}</span>
    </div>
  </div>
  <div class="dev">
    {#each devItems as [icon, label, w]}
      <span class="ditem">{@render ic(icon, 's16')}{@render T(label, w, 'p15')}{@render ic('chev', 's9')}</span>
    {/each}
    <span class="grow"></span>
    <span class="status">{@render ic('check', 's16')}{@render ic('stop', 's16')}{@render ic('stop', 's16')}</span>
  </div>
{/snippet}

{#snippet adminbar()}
  <div class="abar">
    {@render ic('wp', 's20')}{@render ic('home', 's17')}{@render T('haveagooday', 80, 'w')}{@render ic('refresh', 's17')}{@render T('3', 7, 'w')}
    {@render ic('comment', 's17')}{@render T('0', 7)}{@render ic('plus', 's15')}{@render T('Créer', 32, 'w')}{@render T('Voir l’article', 71, 'w')}
    {@render ic('yoast', 's19')}<span class="odot"></span>{@render ic('lang', 's20')}{@render T('Afficher toutes les langues', 157, 'w')}
    <span class="user">{@render T('Salutations, root', 98, 'w')}<svg class="avatar" viewBox="0 0 18 18"><path d="M0 0h18v18H0z" fill="#999" /><path d="M1 1h16v16H1z" fill="#c5c5c5" /><circle cx="9" cy="7" r="3.500" fill="#fff" /><path d="M3 17q0-6 4-6h4q4 0 4 6z" fill="#fff" /></svg></span>
  </div>
{/snippet}

{#snippet menuItem([icon, label, w])}
  <div class="mi"><span class="mic">{@render ic(icon, 's18')}</span>{@render T(label, w)}</div>
{/snippet}

{#snippet sidebar()}
  <div class="side">
    {@render menuItem(['dash', 'Tableau de bord', 99.5])}
    <div class="gap"></div>
    <div class="mi current"><span class="mic">{@render ic('pin', 's18')}</span>{@render T('Articles', 49)}<span class="grow"></span><i class="notch"></i></div>
    <div class="sub">
      {@render T('Tous les articles', 100, 'bold w')}{@render T('Ajouter', 43.5)}{@render T('Catégories', 63.5)}{@render T('Étiquettes', 59.5)}
    </div>
    {#each menuTop as m}{@render menuItem(m)}{/each}
    <div class="gap"></div>
    {#each menuMid as m}{@render menuItem(m)}{/each}
    <div class="gap"></div>
    <div class="mi"><span class="mic dim">{@render ic('yoast', 's19')}</span>{@render T('SEO', 25.5)}<b class="badge">2</b></div>
    {@render menuItem(['lang', 'Langues', 52])}
    <div class="mi dim"><span class="mic">{@render ic('collapse', 's18')}</span>{@render T('Réduire le menu', 94, 'p13')}</div>
  </div>
{/snippet}

{#snippet favicon(icon, label, w)}
  <div class="tab">{#if icon}{@render ic(icon, 's16')}{/if}{@render T(label, w, 'p15')}{#if icon === 'youtube'}{@render ic('sound', 's14')}{/if}</div>
{/snippet}

<svg class="defs" width="0" height="0">
  <defs>
    <radialGradient id="gUbuntu" cx=".5" cy=".6" r=".75"><stop offset="0" stop-color="#a3123f" /><stop offset=".6" stop-color="#9c2350" /><stop offset="1" stop-color="#c56d8c" /></radialGradient>
    <linearGradient id="gFiles" x2="0" y2="1"><stop offset="0" stop-color="#b98a86" /><stop offset=".4" stop-color="#8f4a4c" /><stop offset="1" stop-color="#7d2c36" /></linearGradient>
    <linearGradient id="gMetal" x2="0" y2="1"><stop offset="0" stop-color="#e4e4e4" /><stop offset="1" stop-color="#9a9a9a" /></linearGradient>
    <linearGradient id="gDrawer" x2="0" y2="1"><stop offset="0" stop-color="#cfcfcf" /><stop offset="1" stop-color="#9f9f9f" /></linearGradient>
    <linearGradient id="gTerm" x2="0" y2="1"><stop offset="0" stop-color="#cf7a74" /><stop offset=".5" stop-color="#b04340" /><stop offset="1" stop-color="#ae3a38" /></linearGradient>
    <linearGradient id="gAtom" x2="0" y2="1"><stop offset="0" stop-color="#7fc093" /><stop offset=".4" stop-color="#4aae72" /><stop offset="1" stop-color="#40a36a" /></linearGradient>
    <linearGradient id="gAtom2" x2="0" y2="1"><stop offset="0" stop-color="#c9e7ad" /><stop offset="1" stop-color="#0f9f68" /></linearGradient>
    <linearGradient id="gFz" x2="0" y2="1"><stop offset="0" stop-color="#c23230" /><stop offset=".4" stop-color="#b40808" /><stop offset="1" stop-color="#980000" /></linearGradient>
    <linearGradient id="gFf" x2="0" y2="1"><stop offset="0" stop-color="#cfa689" /><stop offset=".4" stop-color="#b5794c" /><stop offset="1" stop-color="#ac6638" /></linearGradient>
    <radialGradient id="gGlobe" cx=".4" cy=".25" r=".8"><stop offset="0" stop-color="#6cc4ee" /><stop offset=".5" stop-color="#1b72bd" /><stop offset="1" stop-color="#123674" /></radialGradient>
    <linearGradient id="gFox" x1="1" y1="0" x2="0" y2="1"><stop offset="0" stop-color="#ffb52e" /><stop offset=".5" stop-color="#ec6a1c" /><stop offset="1" stop-color="#d44a16" /></linearGradient>
    <linearGradient id="gDark" x2="0" y2="1"><stop offset="0" stop-color="#a47089" /><stop offset=".35" stop-color="#73234d" /><stop offset="1" stop-color="#722750" /></linearGradient>
    <linearGradient id="gBag" x2="0" y2="1"><stop offset="0" stop-color="#e3784b" /><stop offset=".74" stop-color="#ee6c2c" /><stop offset=".75" stop-color="#f5824a" /><stop offset="1" stop-color="#ee7a45" /></linearGradient>
    <linearGradient id="gPaper" x2="0" y2="1"><stop offset="0" stop-color="#cfc9ce" /><stop offset=".4" stop-color="#a9a0a5" /><stop offset="1" stop-color="#b3aaaf" /></linearGradient>
    <linearGradient id="gGimp" x2="0" y2="1"><stop offset="0" stop-color="#d4b080" /><stop offset=".4" stop-color="#b98a45" /><stop offset="1" stop-color="#b07f3b" /></linearGradient>
    <linearGradient id="gWilber" x2="0" y2="1"><stop offset="0" stop-color="#8b8878" /><stop offset="1" stop-color="#45433b" /></linearGradient>
    <linearGradient id="gDisk" x2="0" y2="1"><stop offset="0" stop-color="#d2d2d2" /><stop offset="1" stop-color="#e0e0e0" /></linearGradient>
    <linearGradient id="gDiskBase"><stop offset="0" stop-color="#ddd" /><stop offset=".2" stop-color="#444" /><stop offset=".6" stop-color="#777" /><stop offset="1" stop-color="#ccc" /></linearGradient>
  </defs>
</svg>

<div class="desktop">
  <div class="monitor left">
    {@render panel('Modifier l’article ‹ haveagooday — WordPress - Mozilla Firefox')}
    <div class="row fill">
      {@render launcher(false)}
      <div class="window">
        <div class="tabs">
          <div class="active">
            <svg class="shape" viewBox="0 0 237 28"><path d="M0 28C9 28 12 24 15 13 17 4 20 0 28 0H207C215 0 218 4 220 13 223 24 227 28 237 28Z" fill="#f4f3f1" /></svg>
            <div class="cap">{@render T('Modifier l’article ‹ have…', 170, 'p15')}{@render ic('closex', 's9')}</div>
          </div>
          <svg class="newtab" viewBox="0 0 13 13"><path d="M6.500 0v13M0 6.500h13" stroke="#fff" stroke-width="3" /></svg>
        </div>
        {@render navbar('Rechercher', 77)}
        <div class="row fill">
          <div class="page">
            {@render adminbar()}
            <div class="row fill">
              {@render sidebar()}
              <div class="content">
                <div class="cols">
                  <div class="main">
                    <div class="box cut"><div class="inner"></div></div>
                    <div class="box custom">
                      <div class="bh">{@render T('Champs personnalisés', 147, 'bold h')}<span class="up">▲</span></div>
                      <div class="table">
                        <div class="th"><b>{@render T('Nom', 28)}</b><b>{@render T('Valeur', 40)}</b></div>
                        {#each fields as [key, kw, value, vw]}
                          <div class="tr">
                            <div class="key">
                              <div class="inp">{@render T(key, kw)}</div>
                              <div class="row g4"><span class="btn sm">{@render T('Supprimer', 51)}</span><span class="btn sm wide">{@render T('Mettre à jour', 66)}</span></div>
                            </div>
                            <div class="area">{@render T(value, vw)}<i class="grip"></i></div>
                          </div>
                        {/each}
                      </div>
                      <div class="h4">{@render T('Ajouter un nouveau champ personnalisé :', 258, 'bold')}</div>
                      <div class="table add">
                        <div class="th"><b>{@render T('Nom', 28)}</b><b>{@render T('Valeur', 40)}</b></div>
                        <div class="tr">
                          <div class="key">
                            <div class="sel">{@render T('— Sélectionner —', 116)}<i class="drop">▾</i></div>
                            <div class="lnk">{@render T('Saisissez-en un nouveau', 139)}</div>
                            <div class="btn big">{@render T('Ajouter un champ personnalisé', 181)}</div>
                          </div>
                          <div class="area"><i class="grip"></i></div>
                        </div>
                      </div>
                      <div class="note">{@render T('Les champs personnalisés peuvent être utilisés pour ajouter des métadonnées supplémentaires à un article, que vous pouvez ensuite', 774)}<span class="u">{@render T('utiliser dans votre thème', 146)}</span>.</div>
                    </div>
                  </div>
                  <div class="box thumb">
                    {@render T('Cliquez sur l’image pour la modifier ou la', 232, 'ital')}
                    {@render T('mettre à jour.', 77, 'ital')}
                    <span class="u">{@render T('Retirer l’image mise en avant', 168)}</span>
                  </div>
                </div>
                <div class="foot"><span class="row g4 ital">{@render T('Merci de faire de', 94)}<span class="u">{@render T('WordPress', 61)}</span>{@render T('votre outil de création.', 128)}</span>{@render T('Version 4.7.3', 74)}</div>
              </div>
            </div>
          </div>
          <div class="scroll low"><i></i></div>
        </div>
      </div>
    </div>
  </div>

  <div class="monitor right">
    {@render panel('')}
    <div class="row fill">
      {@render launcher(true)}
      <div class="window">
        <div class="tabs many">
          {#each tabsBefore as [i, l, w]}{@render favicon(i, l, w)}{/each}
          <div class="tab cur">
            <svg class="shape" viewBox="0 0 145 28"><path d="M0 28C9 28 12 24 15 13 17 4 20 0 28 0H117C125 0 128 4 130 13 133 24 136 28 145 28Z" fill="#f4f3f1" /></svg>
            <div class="cap">{@render T('Modifier l’…', 84, 'p15')}{@render ic('closex', 's9')}</div>
          </div>
          {#each tabsAfter as [i, l, w]}{@render favicon(i, l, w)}{/each}
          <svg class="newtab" viewBox="0 0 13 13"><path d="M6.500 0v13M0 6.500h13" stroke="#fff" stroke-width="3" /></svg>
        </div>
        {@render navbar('http://localhost/wordpress/index.php', 262)}
        <div class="row fill">
          <div class="page">
            {@render adminbar()}
            <div class="row fill">
              {@render sidebar()}
              <div class="content">
                <div class="top">
                  <div class="heading">{@render T('Modifier l’article', 172, 'h1')}<span class="btn addnew">{@render T('Ajouter', 49, 'bold')}</span></div>
                  <span class="meta m1">{@render T('Options de l’écran', 107)}<i>▼</i></span>
                  <span class="meta">{@render T('Aide', 27)}<i>▼</i></span>
                </div>
                <div class="cols">
                  <div class="main">
                    <div class="title">{@render T('Créer une atmosphère de travail sur-mesure', 435, 'h1')}</div>
                    <div class="perma">
                      {@render T('Permalien :', 69, 'bold')}<span class="u">{@render T('http://localhost/wordpress/index.php/fr/', 243)}{@render T('creer-une-atmosp…avail-sur-mesure/', 231, 'bold')}</span><span class="btn sm">{@render T('Modifier', 42)}</span>
                    </div>
                    <div class="edtop"><span class="btn addm">{@render ic('media', 's17 onlight')}{@render T('Ajouter un média', 99)}</span><span class="grow"></span><span class="vt">{@render T('Visuel', 36)}</span><span class="vt on">{@render T('Texte', 32)}</span></div>
                    <div class="editor">
                      <div class="qt">
                        {#each quicktags as [l, w, c]}<span class="btn {c}" style:width="{w}px">{@render T(l, w - 17)}</span>{/each}
                        <span class="grow"></span>{@render ic('expand', 's17')}
                      </div>
                      <pre class="text">{article}</pre>
                      <div class="stat">{@render T('Nombre de mots : 144', 122)}{@render T('Dernière modification par root, le 24 mars 2017 à 10 h 30 min', 339)}</div>
                    </div>
                    <div class="box yoast">
                      <div class="bh">{@render T('Yoast SEO', 68, 'bold h')}<span class="up">▲</span></div>
                      <div class="hc">{@render ic('help', 's14')}{@render T('Help center', 68)}<i>▼</i><span class="grow"></span>{@render ic('gostar', 's18')}<span class="u">{@render T('Go Premium', 72)}</span></div>
                      <div class="yb">
                        <div class="rail">
                          <div class="row g10"><i class="vbar"></i><span class="light"><i></i><i class="mid"></i><i></i></span></div>
                          {@render ic('share', 's24 blue')}
                        </div>
                        <div class="ypane">
                          <div class="ytabs">
                            <span class="yt"><i class="dot r"></i><span class="blue">{@render T('Readability', 66)}</span></span>
                            <span class="yt on"><i class="dot"></i>{@render T('Keyword:', 55)}{@render T('atmosphère de travail', 125, 'ital')}</span>
                            <span class="addk">{@render T('+ Add keyword', 82)}</span>
                          </div>
                          <div class="ybody"><div class="snip">{@render ic('eye', 's17')}{@render T('Aperçu de l’extrait', 131, 'p15')}<span class="grow"></span>{@render ic('help', 's14')}</div></div>
                        </div>
                      </div>
                    </div>
                  </div>
                  <div class="aside">
                    <div class="box lang">
                      <div class="bh">{@render T('Langues', 54, 'bold h')}<span class="up">▲</span></div>
                      <div class="lt first">{@render T('Langue', 45, 'bold')}</div>
                      <div class="lsel">{@render ic('fr', 's16')}<span class="sel short">{@render T('Français', 52)}<i class="drop">▾</i></span></div>
                      <div class="lt">{@render T('Traductions', 74, 'bold')}</div>
                      <div class="lrow">{@render ic('gb', 's16')}{@render ic('edit', 's15 blue')}<div class="inp">{@render T('Create new internal commun', 184)}</div></div>
                      <div class="lrow">{@render ic('es', 's16')}{@render ic('edit', 's15 blue')}<div class="inp">{@render T('Crear una nueva estrategia de', 187)}</div></div>
                    </div>
                    <div class="box pub">
                      <div class="bh">{@render T('Publier', 46, 'bold h')}<span class="up">▲</span></div>
                      <div class="prev"><span class="btn">{@render T('Prévisualiser les modifications', 178)}</span></div>
                      <div class="pr">{@render ic('post', 's17')}{@render T('État :', 30)}{@render T('Publié', 39, 'bold')}<span class="u">{@render T('Modifier', 50)}</span></div>
                      <div class="pr">{@render ic('eye', 's18')}{@render T('Visibilité :', 57)}{@render T('Public', 38, 'bold')}<span class="u">{@render T('Modifier', 50)}</span></div>
                      <div class="pr">{@render ic('cal', 's17')}{@render T('Publié le :', 57)}{@render T('15 mars 2017 à 15 h 55 min', 157, 'bold')}</div>
                      <div class="pr2"><span class="u">{@render T('Modifier', 50)}</span></div>
                      <div class="pr ys">{@render ic('yred', 's18 red')}{@render T('Readability:', 69)}{@render T('Needs improvement', 126, 'bold')}</div>
                      <div class="pr ys seo">{@render ic('yorange', 's18 orange')}{@render T('SEO:', 27)}{@render T('OK', 19, 'bold')}</div>
                      <div class="act"><span class="del">{@render T('Déplacer dans la corbeille', 153)}</span><span class="primary">{@render T('Mettre à jour', 76)}</span></div>
                    </div>
                    <div class="box cat">
                      <div class="bh">{@render T('Catégories', 73, 'bold h')}<span class="up">▲</span></div>
                      <div class="ctabs"><span class="ct">{@render T('Toutes', 39)}</span><span class="blue">{@render T('Les plus utilisées', 98)}</span></div>
                    </div>
                  </div>
                </div>
              </div>
            </div>
          </div>
          <div class="scroll high"><i></i></div>
        </div>
      </div>
    </div>
  </div>
</div>

<style>
  :global(body) { margin: 0; background: #000; }
  .desktop { --hole: #23282d; width: 3520px; height: 1080px; display: flex; overflow: hidden; font-family: Ubuntu, "Noto Sans", "Open Sans", sans-serif; font-size: 13px; color: #444; line-height: 18px; }
  .desktop :global(*) { box-sizing: border-box; }
  .defs { display: block; height: 0; }
  .t { display: inline-block; white-space: pre; flex: none; }
  .i { display: block; flex: none; width: 16px; height: 16px; }
  .s9 { width: 9px; height: 9px; } .s10 { width: 10px; height: 10px; } .s14 { width: 14px; height: 14px; } .s15 { width: 15px; height: 15px; }
  .s16 { width: 16px; height: 16px; } .s17 { width: 17px; height: 17px; } .s18 { width: 18px; height: 18px; } .s19 { width: 19px; height: 19px; }
  .s20 { width: 20px; height: 20px; } .s24 { width: 24px; height: 24px; }
  .hole { fill: var(--hole); }
  .row { display: flex; } .fill { flex: 1; min-height: 0; } .grow { flex: 1; }
  .g4 { gap: 4px; } .g10 { gap: 10px; align-items: center; }
  .bold { font-weight: 700; font-size: 12.600px; } .ital { font-style: italic; } .w { color: #eee; } .h { font-size: 13.500px; color: #23282d; }
  .p15 { font-size: 14.500px; } .p13 { font-size: 13px; }
  .bold.p15 { font-size: 14px; }
  .blue { color: #0073aa; }
  .u { color: #0073aa; white-space: pre; display: inline-flex; }
  .u .t { text-decoration: underline; text-underline-offset: 2px; }

  .monitor { display: flex; flex-direction: column; flex: none; overflow: hidden; }
  .left { width: 1920px; height: 1080px; }
  .right { width: 1600px; height: 900px; margin-top: 25px; }

  .panel { height: 24px; flex: none; display: flex; align-items: center; justify-content: space-between; color: #dfdbd2; background: linear-gradient(#5f5c50, #54524a 15%, #403f3a); }
  .ptitle { padding-left: 6px; }
  .tray { width: 227px; display: grid; grid-template-columns: 32px 28px 26px 35px 34px 47px 25px; align-items: center; }
  .kbd { width: 20px; height: 20px; border-radius: 2px; background: #dfdbd2; color: #56534c; display: flex; align-items: center; justify-content: center; }
  .kb { font-size: 14px; font-weight: 500; }
  .batt { width: 24px; height: 14px; } .vol { width: 21px; height: 18px; }

  .launcher { width: 65px; flex: none; padding: 6px 0; display: flex; flex-direction: column; gap: 7px; background: linear-gradient(#420d29, #64133b 14px); border-right: 1px solid #8a3f68; }
  .slot { display: grid; grid-template-columns: 6px 52px 6px; align-items: center; height: 52px; flex: none; }
  .last { margin-top: auto; }
  .mark { width: 6px; height: 12px; overflow: hidden; }
  .app { width: 52px; height: 52px; display: block; filter: drop-shadow(0 2px 2px rgba(0, 0, 0, .35)); }
  .tile { stroke: rgba(255, 255, 255, .22); }

  .window { flex: 1; min-width: 0; display: flex; flex-direction: column; background: #f4f3f1; }
  .tabs { height: 32px; flex: none; display: flex; align-items: flex-end; background: #3c3b37; box-shadow: inset 0 -1px 0 #2b2a27; color: #4c4c4c; }
  .active { display: grid; width: 237px; height: 28px; }
  .shape { grid-area: 1 / 1; height: 28px; display: block; }
  .active .shape { width: 237px; }
  .cap { grid-area: 1 / 1; display: flex; align-items: center; gap: 12px; padding-left: 24px; }
  .newtab { width: 13px; height: 13px; margin: 0 0 8px -1px; }
  .many { height: 30px; padding-left: 15px; color: #dfdbd2; }
  .tab { width: 122.300px; height: 28px; flex: none; display: flex; align-items: center; gap: 6px; padding-left: 10px; border-right: 1px solid #65635c; background-clip: padding-box; }
  .tab .s14 { margin-left: 8px; }
  .cur { display: grid; padding: 0; border: 0; color: #4c4c4c; z-index: 1; }
  .cur .shape { width: 145px; margin-left: -10px; }
  .cur .cap { padding-left: 9px; gap: 11px; }
  .many .newtab { margin-left: 12px; }

  .nav { height: 44px; flex: none; display: flex; align-items: center; padding: 0 0 4px 5px; background: #f4f3f1; }
  .backbtn { width: 31px; height: 31px; border-radius: 50%; border: 1px solid #bdbbb8; background: #f4f3f1; display: flex; align-items: center; justify-content: center; color: #444; z-index: 1; }
  .url { flex: 1; height: 24px; margin-left: -14px; padding: 0 9px 0 18px; display: flex; align-items: center; border: 1px solid #c1bfbd; border-radius: 2px; background: #fff; }
  .host { font-size: 15px; color: #3c3c3c; } .path { font-size: 15px; color: #9b9b9b; }
  .grey { color: #7b7b7b; } .lgrey { color: #a0a0a0; } .blueg { color: #8a9bab; }
  .vsep { width: 1px; height: 16px; margin: 0 5px 0 6px; background: #ccc; }
  .tall { margin: 0 8px; }
  .find { width: 332px; height: 24px; margin-left: 8px; padding-left: 4px; display: flex; align-items: center; gap: 4px; border: 1px solid #c1bfbd; border-radius: 2px; background: #fff; }
  .narrow { width: 267px; }
  .q { width: 227px; overflow: hidden; display: flex; }
  .btns { width: 353px; flex: none; display: grid; grid-template-columns: 36px 1px 32px 44px 32px 44px 32px 31px 1px 15px 42px 1px 42px; align-items: center; color: #555; }
  .btns span { display: flex; justify-content: center; }
  .btns .first { padding-left: 8px; } .btns .flyc { padding-left: 6px; }
  .vline { height: 18px; background: #ccc; }
  .long { height: 36px; background: #dad8d6; }
  .dev { height: 26px; flex: none; display: flex; align-items: center; padding: 0 10px 3px; border-bottom: 1px solid #bdbbb8; color: #4c4c4c; }
  .ditem { display: flex; align-items: center; padding-right: 14px; }
  .ditem .t { margin: -2px 4px 0 2.500px; }
  .status { display: flex; gap: 12px; }

  .page { flex: 1; min-width: 0; display: flex; flex-direction: column; }
  .scroll { width: 10px; background: #e5e5e5; display: flex; flex-direction: column; align-items: flex-end; }
  .scroll i { width: 3px; background: #ef8a66; }
  .low { justify-content: flex-end; } .low i { height: 362px; } .high i { height: 237px; }
  .abar { height: 32px; flex: none; display: grid; grid-template-columns: 37px 24px 96px 25px 25px 23px 24px 24px 47px 88px 28px 39px 27px 1fr auto; align-items: center; padding: 0 8px 0 7px; background: #23282d; color: #a0a5aa; font-size: 13px; }
  .odot { width: 12px; height: 12px; border-radius: 50%; background: #ee7c1b; }
  .user { display: flex; align-items: center; gap: 6px; }
  .avatar { width: 18px; height: 18px; }
  .side { width: 160px; flex: none; padding-top: 12px; background: #23282d; color: #eee; font-size: 14px; }
  .mi { height: 34px; display: flex; align-items: center; }
  .mic { width: 36px; display: flex; justify-content: center; color: #a0a5aa; }
  .mi.dim { color: #a0a5aa; } .mic.dim { color: #82878c; }
  .gap { height: 11px; }
  .current { background: #0073aa; color: #fff; } .current .mic { color: #fff; }
  .notch { border: 8px solid transparent; border-left: 0; border-right-color: #f1f1f1; }
  .sub { height: 125px; padding: 7px 12px; display: flex; flex-direction: column; background: #32373c; color: #b4b9be; font-size: 13px; line-height: 27.700px; }
  .sub .w { color: #fff; }
  .badge { width: 17px; height: 17px; flex: none; margin-left: 6px; border-radius: 50%; background: #d54e21; color: #fff; font-size: 9px; line-height: 17px; text-align: center; }

  .content { flex: 1; min-width: 0; padding-left: 22px; background: #f1f1f1; overflow: hidden; }
  .cols { display: flex; gap: 20px; align-items: flex-start; }
  .main { width: 1343px; flex: none; }
  .right .main { width: 1023px; }
  .box { background: #fff; border: 1px solid #e5e5e5; box-shadow: 0 1px 1px rgba(0, 0, 0, .04); }
  .cut { height: 30px; border-top: 0; padding: 0 12px 0 62px; }
  .inner { height: 17px; border: 1px solid #ddd; border-top: 0; background: #fdfdfd; }
  .custom { height: 769px; margin-top: 20px; padding: 0 12px; }
  .bh { height: 37px; display: flex; align-items: center; justify-content: space-between; padding: 0 13px 0 12px; border-bottom: 1px solid #eee; }
  .custom .bh { margin: 0 -12px; }
  .up { font-size: 9px; color: #72777c; font-family: "DejaVu Sans", sans-serif; }
  .table { height: 485px; margin-top: 6px; border: 1px solid #ddd; background: #f9f9f9; }
  .th { height: 31px; padding-bottom: 2px; display: grid; grid-template-columns: 500px 816px; align-items: center; text-align: center; background: #f1f1f1; }
  .tr { height: 75.200px; padding: 9px 0 0 9px; display: grid; grid-template-columns: 478px 780px; gap: 22px; align-items: start; }
  .key { font-size: 14px; color: #32373c; }
  .inp { height: 24px; padding: 0 5px; border: 1px solid #ddd; background: #fff; box-shadow: inset 0 1px 2px rgba(0, 0, 0, .07); font-size: 14px; color: #32373c; display: flex; align-items: center; margin-bottom: 8px; overflow: hidden; }
  .area { height: 55px; padding: 3px 6px; border: 1px solid #ddd; background: #fff; box-shadow: inset 0 1px 2px rgba(0, 0, 0, .07); font-size: 14px; color: #32373c; display: flex; }
  .grip { align-self: flex-end; margin: 0 -5px -2px auto; border: 4px solid transparent; border-right-color: #e4e4e4; border-bottom-color: #e4e4e4; }
  .btn { height: 25px; display: inline-flex; align-items: center; justify-content: center; border: 1px solid #ccc; border-radius: 3px; background: #f7f7f7; box-shadow: 0 1px 0 #ccc; color: #555; font-size: 13px; }
  .sm { height: 24px; width: 67px; font-size: 11px; } .sm.wide { width: 83px; }
  .h4 { height: 45px; display: flex; align-items: center; }
  .add { height: 148px; margin: 0; } .add .th { height: 33px; }
  .sel { height: 28px; padding-left: 6px; display: flex; align-items: center; justify-content: space-between; border: 1px solid #ddd; background: #fff; box-shadow: inset 0 1px 2px rgba(0, 0, 0, .07); font-size: 14px; color: #32373c; overflow: hidden; }
  .drop { width: 9px; height: 25px; font: 9px/22px "DejaVu Sans", sans-serif; background: #f1f1f1; border-right: 2px solid #777; border-bottom: 2px solid #777; color: #000; }
  .lnk { height: 39px; padding-top: 8px; color: #0073aa; font-size: 13px; }
  .big { width: 203px; height: 28px; display: flex; }
  .note { height: 47px; padding-bottom: 1px; display: flex; align-items: center; } .note .u { margin-left: 4px; }
  .thumb { width: 280px; height: 92px; padding: 0 13px; display: flex; flex-direction: column; color: #666; }
  .thumb .t { line-height: 20px; } .thumb > .t:first-child { margin-top: -6px; }
  .thumb .u { margin-top: 11px; }
  .foot { height: 129px; padding-right: 20px; display: flex; align-items: center; justify-content: space-between; color: #555d66; } .foot .ital { margin-left: -1px; } .foot .ital .ital, .foot .row .t { margin-left: 0; }

  .top { height: 62px; padding-right: 20px; display: flex; align-items: flex-start; gap: 6px; }
  .heading { flex: 1; height: 68px; display: flex; align-items: center; gap: 9px; }
  .h1 { font-size: 22px; color: #23282d; line-height: 30px; }
  .addnew { width: 66px; height: 24px; border-radius: 2px; box-shadow: none; } .addnew .t { color: #0073aa; }
  .meta { height: 28px; padding-left: 16px; display: flex; align-items: center; gap: 7px; background: #fff; border: 1px solid #ddd; border-top: 0; width: 76px; color: #72777c; box-shadow: 0 1px 1px rgba(0, 0, 0, .04); }
  .m1 { width: 156px; } .meta i { font: 9px "DejaVu Sans", sans-serif; }
  .title { height: 39px; padding: 0 0 1px 8px; display: flex; align-items: center; background: #fff; border: 1px solid #ddd; box-shadow: inset 0 1px 2px rgba(0, 0, 0, .07); }
  .title .t { color: #32373c; }
  .perma { height: 40px; padding-left: 10px; display: flex; align-items: center; color: #666; gap: 3px; } .perma .btn { width: 60px; }
  .edtop { height: 46px; display: flex; align-items: flex-end; gap: 5px; }
  .addm { --hole: #f7f7f7; width: 139px; height: 28px; gap: 6px; align-self: flex-start; margin-top: 12px; color: #555; }
  .onlight { color: #82878c; }
  .vt { width: 54px; height: 28px; display: flex; align-items: center; justify-content: center; border: 1px solid #e5e5e5; border-bottom: 0; background: #ebebeb; color: #777; font-size: 14px; }
  .vt.on { width: 50px; height: 29px; margin-bottom: -1px; padding-bottom: 1px; background: #f5f5f5; color: #555; z-index: 1; }
  .editor { height: 361px; display: flex; flex-direction: column; border: 1px solid #e5e5e5; background: #fff; }
  .qt { height: 38px; padding: 0 11px 1px 5px; display: flex; align-items: center; gap: 4.200px; background: #f5f5f5; border-bottom: 1px solid #ddd; color: #555; }
  .und .t { text-decoration: underline; } .strike .t { text-decoration: line-through; }
  .text { flex: 1; margin: 0; padding: 9px 10px 0; font: 13px/19.500px "DejaVu Sans Mono", monospace; letter-spacing: .168px; color: #32373c; }
  .stat { height: 23px; padding: 0 10px; display: flex; align-items: center; justify-content: space-between; background: #f7f7f7; border-top: 1px solid #e5e5e5; font-size: 12px; }
  .yoast { height: 260px; margin-top: 21px; }
  .hc { height: 41px; padding: 0 12px 1px 15px; display: flex; align-items: center; gap: 7px; color: #a4286a; border-bottom: 1px solid #a4286a; font-size: 14px; }
  .hc i { font: 9px "DejaVu Sans", sans-serif; margin-left: 4px; } .hc .u { font-size: 13px; margin-left: -1px; }
  .yb { display: flex; padding: 25px 12px 0; }
  .rail { width: 50px; height: 80px; padding-top: 2px; display: flex; flex-direction: column; gap: 18px; } .rail .i { margin-left: 10px; }
  .vbar { width: 3px; height: 30px; flex: none; background: #32373c; border-radius: 2px; }
  .light { width: 19px; height: 30px; flex: none; border: 1.500px solid #6b2c50; border-radius: 4px; display: flex; flex-direction: column; align-items: center; justify-content: center; gap: 1px; }
  .light i { width: 7px; height: 7px; border-radius: 50%; background: #ccc; } .light .mid { background: #f59b00; }
  .ypane { flex: 1; }
  .ytabs { height: 31px; display: flex; align-items: flex-start; border-bottom: 1px solid #ddd; }
  .yt { width: 114px; height: 30px; padding-left: 12px; display: flex; align-items: center; border: 1px solid #ddd; border-bottom: 0; background: #fff; }
  .yt.on { width: 231px; height: 31px; margin-left: 5px; background: #fdfdfd; gap: 4px; color: #32373c; }
  .dot { width: 12px; height: 12px; margin-right: 10px; border-radius: 50%; background: #ee7c1b; } .dot.r { background: #dc3232; }
  .yt.on .dot { margin-right: 6px; }
  .addk { height: 20px; margin: 1px 0 0 6px; padding: 0 6px; display: flex; align-items: center; border: 1px solid #ccc; border-bottom-width: 2px; border-radius: 3px; color: #000; background: #fff; }
  .ybody { height: 60px; padding: 20px 0 0 16px; border: 1px solid #ddd; border-top: 0; background: #fdfdfd; }
  .snip { width: 641px; height: 40px; padding: 0 20px 6px; display: flex; align-items: center; gap: 9px; background: #fff; box-shadow: 0 0 2px rgba(0, 0, 0, .2); color: #555; }

  .aside { width: 280px; }
  .lang { height: 238px; }
  .lt { height: 49px; padding: 3px 12px 0; display: flex; align-items: center; } .lt.first { height: 46px; padding-top: 0; }
  .lsel { height: 27px; padding-left: 16px; display: flex; align-items: center; gap: 37px; }
  .short { width: 75px; height: 27px; }
  .lrow { height: 32px; padding-left: 17px; display: flex; align-items: center; } .lrow .s15 { margin: 0 7px 0 10px; } .lrow .inp { width: 197px; height: 24px; margin: 0; flex: none; }
  .pub { height: 346px; margin-top: 20px; }
  .prev { height: 42px; padding: 9px 10px 0; display: flex; justify-content: flex-end; } .prev .btn { width: 200px; height: 28px; flex: none; }
  .pr { height: 34px; padding-left: 10px; display: flex; align-items: center; gap: 3px; color: #444; } .pr > .i { margin-right: 5px; color: #82878c; } .pr .u { margin-left: 1px; }
  .pr .s17 { margin-right: 6px; }
  .pr2 { height: 20px; padding-left: 10px; margin-top: -6px; }
  .pr.ys { height: 32px; margin-top: 6px; } .ys > .i { margin-right: 2px; } .seo.pr.ys { margin-top: 0; }
  .pr > .red.i { color: #dc3232; } .pr > .orange.i { color: #ee7c1b; }
  .act { height: 79px; padding: 16px 10px 0; background: #f5f5f5; border-top: 1px solid #ddd; display: flex; flex-direction: column; }
  .del { color: #a00; } .del .t { text-decoration: underline; text-underline-offset: 2px; }
  .primary { width: 102px; height: 31px; margin-top: 4px; align-self: flex-end; display: flex; align-items: center; justify-content: center; background: #0085ba; border: 1px solid #006799; border-bottom-width: 2px; border-radius: 3px; color: #fff; }
  .cat { height: 120px; margin-top: 20px; }
  .ctabs { padding: 10px 12px; display: flex; gap: 9px; } .ct { width: 51px; height: 22px; border: 1px solid #ddd; border-bottom: 0; display: flex; align-items: center; justify-content: center; color: #32373c; }
  .ctabs .blue { padding-top: 1px; }

  .wmark { font: bold 14px "Liberation Serif", serif; fill: #23282d; }
  .glyph { font: bold 9px "Noto Sans", "Noto Sans CJK SC", sans-serif; fill: #23282d; } .glyph.tiny { font-size: 8.500px; }
  .ub { font: bold 7px "Liberation Sans", sans-serif; fill: #fff; }
  .pma { font: bold 8.500px "Liberation Sans", sans-serif; fill: #6c78af; letter-spacing: -.500px; }
  .qm { font: bold 14px "Noto Sans", sans-serif; fill: #fff; }
</style>
